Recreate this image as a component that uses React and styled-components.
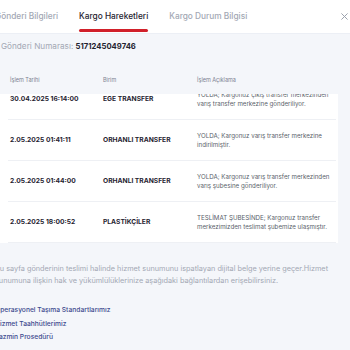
import React, { useLayoutEffect, useRef } from 'react';
import styled, { createGlobalStyle, css } from 'styled-components';

const Global = createGlobalStyle`
  html, body { margin: 0; padding: 0; background: #f4f6fa; }
  body {
    font-family: Inter, "Noto Sans", sans-serif;
    overflow: hidden;
    width: 350px;
    height: 350px;
  }
`;

const Modal = styled.div`
  width: 362px;
  margin-left: -6px;
  height: 350px;
  background: #f4f6fa;
  display: flex;
  flex-direction: column;
`;

const TabBar = styled.div`
  height: 33px;
  flex: none;
  background: #fff;
  display: flex;
  align-items: stretch;
  gap: 21px;
  padding: 0 8px 0 1px;
  border-bottom: 1px solid #eceff5;
`;

const Tab = styled.div`
  position: relative;
  display: flex;
  align-items: center;
  padding-bottom: 1px;
  font-size: 8.3px;
  font-weight: 500;
  color: ${(p) => (p.$active ? '#1f2330' : '#a3a8b4')};
  white-space: nowrap;
  ${(p) =>
    p.$active &&
    css`
      &::after {
        content: '';
        position: absolute;
        left: 0;
        right: 0;
        bottom: 1.5px;
        height: 2.5px;
        border-radius: 2px;
        background: #d1202a;
      }
    `}
`;

const Close = styled.div`
  margin-left: auto;
  display: flex;
  align-items: center;
  color: #9aa0ac;
`;

const Content = styled.div`
  flex: 1;
  display: flex;
  flex-direction: column;
  padding: 0 18px 0 0;
`;

const NumberRow = styled.div`
  padding: 7px 0 0 7px;
  font-size: 8.2px;
  line-height: 11px;
  color: #a3a8b4;
  white-space: nowrap;
  & b {
    font-size: 7.7px;
    color: #1f2330;
    font-weight: 700;
  }
`;

const Table = styled.div`
  margin-top: 20px;
  display: flex;
  flex-direction: column;
`;

const Cols = css`
  display: grid;
  grid-template-columns: 93px 94px 1fr;
`;

const HeadRow = styled.div`
  ${Cols};
  align-items: start;
  height: 22px;
  box-sizing: border-box;
  padding: 5px 0 0 16px;
  font-size: 5.5px;
  line-height: 7px;
  color: #7c8190;
`;

const Body = styled.div`
  background: #fff;
  max-height: 149px;
  overflow-y: auto;
  scrollbar-width: none;
  padding-left: 14px;
  padding-right: 2px;
  &::-webkit-scrollbar { display: none; }
`;

const Row = styled.div`
  ${Cols};
  align-items: center;
  height: 40px;
  padding-left: 2px;
  border-bottom: 1px solid #eef0f4;
`;

const Strong = styled.div`
  font-size: 6.7px;
  font-weight: 700;
  color: #1f2330;
  white-space: nowrap;
`;

const Desc = styled.div`
  font-size: 6.2px;
  line-height: 9px;
  color: #5a5f6b;
`;

const Footer = styled.div`
  padding: 20px 0 0 1px;
`;

const Note = styled.p`
  margin: 0;
  font-size: 7.3px;
  line-height: 12px;
  color: #a3a8b4;
  padding-right: 8px;
`;

const Links = styled.div`
  margin-top: 17px;
  display: flex;
  flex-direction: column;
`;

const Link = styled.a`
  font-size: 6.7px;
  line-height: 13.5px;
  font-weight: 500;
  color: #3d4a8e;
  text-decoration: none;
`;

const rows = [
  ['30.04.2025 16:14:00', 'EGE TRANSFER', 'YOLDA; Kargonuz çıkış transfer merkezinden varış transfer merkezine gönderiliyor.'],
  ['2.05.2025 01:41:11', 'ORHANLI TRANSFER', 'YOLDA; Kargonuz varış transfer merkezine indirilmiştir.'],
  ['2.05.2025 01:44:00', 'ORHANLI TRANSFER', 'YOLDA; Kargonuz varış transfer merkezinden varış şubesine gönderiliyor.'],
  ['2.05.2025 18:00:52', 'PLASTİKÇİLER', 'TESLİMAT ŞUBESİNDE; Kargonuz transfer merkezimizden teslimat şubemize ulaşmıştır.'],
];

export default function App() {
  const bodyRef = useRef(null);
  useLayoutEffect(() => {
    if (bodyRef.current) bodyRef.current.scrollTop = bodyRef.current.scrollHeight;
  }, []);
  return (
    <>
      <Global />
      <Modal>
        <TabBar>
          <Tab>Gönderi Bilgileri</Tab>
          <Tab $active>Kargo Hareketleri</Tab>
          <Tab>Kargo Durum Bilgisi</Tab>
          <Close>
            <svg width="7" height="7" viewBox="0 0 10 10" fill="none" stroke="currentColor" strokeWidth="1.4" strokeLinecap="round">
              <path d="M1 1 L9 9 M9 1 L1 9" />
            </svg>
          </Close>
        </TabBar>
        <Content>
          <NumberRow>
            Gönderi Numarası: <b>5171245049746</b>
          </NumberRow>
          <Table>
            <HeadRow>
              <span>İşlem Tarihi</span>
              <span>Birim</span>
              <span>İşlem Açıklama</span>
            </HeadRow>
            <Body ref={bodyRef}>
              {rows.map((r) => (
                <Row key={r[0]}>
                  <Strong>{r[0]}</Strong>
                  <Strong>{r[1]}</Strong>
                  <Desc>{r[2]}</Desc>
                </Row>
              ))}
            </Body>
          </Table>
          <Footer>
            <Note>
              Bu sayfa gönderinin teslimi halinde hizmet sunumunu ispatlayan dijital belge yerine geçer.Hizmet sunumuna ilişkin hak ve yükümlülüklerinize aşağıdaki bağlantılardan erişebilirsiniz.
            </Note>
            <Links>
              <Link href="#">Operasyonel Taşıma Standartlarımız</Link>
              <Link href="#">Hizmet Taahhütlerimiz</Link>
              <Link href="#">Tazmin Prosedürü</Link>
            </Links>
          </Footer>
        </Content>
      </Modal>
    </>
  );
}
